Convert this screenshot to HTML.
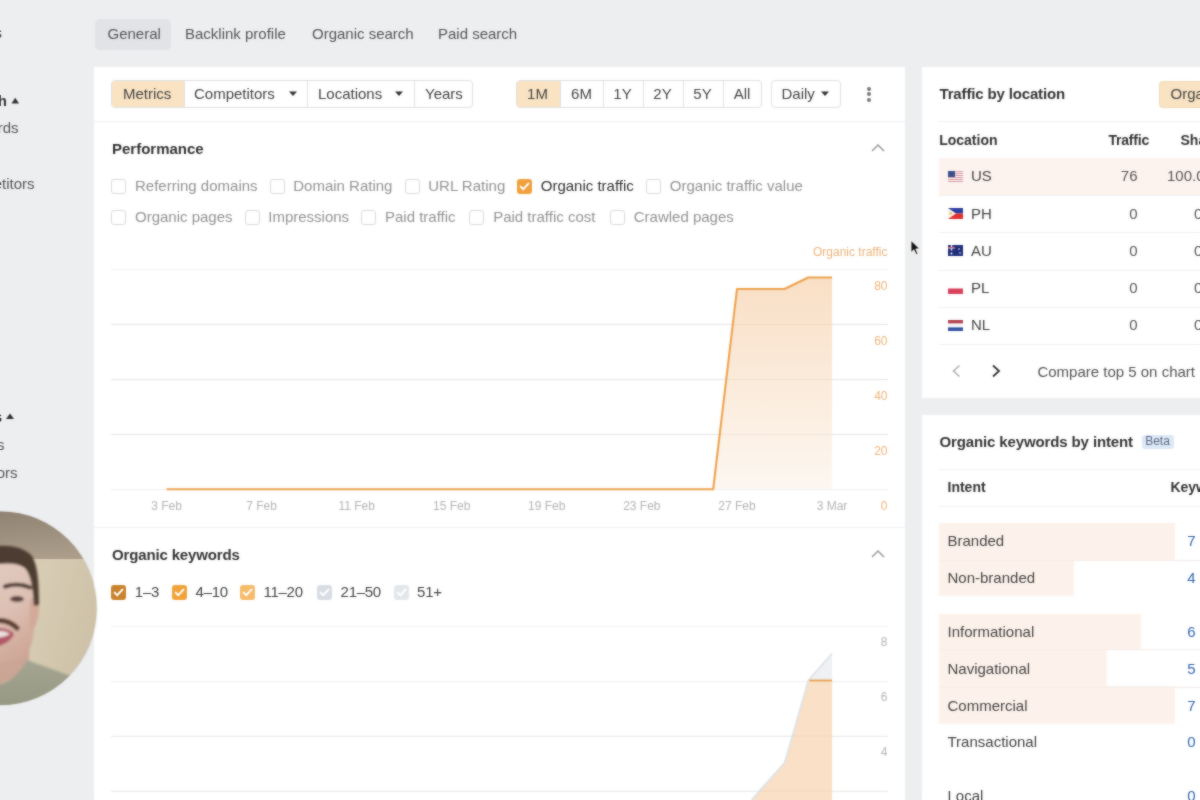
<!DOCTYPE html>
<html><head><meta charset="utf-8">
<style>
*{box-sizing:border-box;margin:0;padding:0}
html,body{width:1200px;height:800px;overflow:hidden}
body{background:#edeef0;font-family:"Liberation Sans",sans-serif;color:#333;position:relative}
.a{position:absolute;white-space:nowrap}
svg{position:absolute;left:0;top:0}
#root{position:absolute;left:0;top:0;width:1200px;height:800px;background:#edeef0;overflow:hidden}
</style></head><body><div id="root" style="will-change:transform">
<div class="a" style="top:23.80px;font-size:15px;line-height:18px;color:#555;font-weight:normal;right:1198px;">s</div>
<div class="a" style="top:91.80px;font-size:15px;line-height:18px;color:#333;font-weight:bold;right:1193px;">Organic search</div>
<svg width="30" height="30" style="left:10px;top:96px"><path d="M1.5 7.5 L5.25 1.8 L9 7.5Z" fill="#333"/></svg>
<div class="a" style="top:119.30px;font-size:15px;line-height:18px;color:#555;font-weight:normal;right:1181.5px;">Organic keywords</div>
<div class="a" style="top:174.50px;font-size:15px;line-height:18px;color:#555;font-weight:normal;right:1165.5px;">Competitors</div>
<div class="a" style="top:407.80px;font-size:15px;line-height:18px;color:#333;font-weight:bold;right:1198px;">Paid keywords</div>
<svg width="30" height="30" style="left:5px;top:412px"><path d="M1 7 L5 1.6 L9 7Z" fill="#333"/></svg>
<div class="a" style="top:436.30px;font-size:15px;line-height:18px;color:#555;font-weight:normal;right:1195.5px;">Ads</div>
<div class="a" style="top:463.80px;font-size:15px;line-height:18px;color:#555;font-weight:normal;right:1182.5px;">Competitors</div>
<div class="a" style="left:95px;top:19px;width:76px;height:31px;background:#e1e3e7;border-radius:5px"></div>
<div class="a" style="top:24.60px;font-size:15px;line-height:18px;color:#555;font-weight:normal;left:107.5px;">General</div>
<div class="a" style="top:24.60px;font-size:15px;line-height:18px;color:#555;font-weight:normal;left:185px;">Backlink profile</div>
<div class="a" style="top:24.60px;font-size:15px;line-height:18px;color:#555;font-weight:normal;left:312px;">Organic search</div>
<div class="a" style="top:24.60px;font-size:15px;line-height:18px;color:#555;font-weight:normal;left:438px;">Paid search</div>
<div class="a" style="left:94px;top:67px;width:811px;height:740px;background:#fff;"></div>
<div class="a" style="left:94px;top:121px;width:811px;height:1px;background:#eef0f2;"></div>
<div class="a" style="left:111px;top:80px;width:362px;height:28px;border:1px solid #dfe1e4;border-radius:4px;background:#fff;overflow:hidden">
<div class="a" style="left:-1px;top:-1px;width:74px;height:28px;background:#f9e3c3"></div>
<div class="a" style="left:72px;top:-1px;width:1px;height:28px;background:#dfe1e4"></div>
<div class="a" style="left:195px;top:-1px;width:1px;height:28px;background:#dfe1e4"></div>
<div class="a" style="left:302px;top:-1px;width:1px;height:28px;background:#dfe1e4"></div>
</div>
<div class="a" style="top:85.10px;font-size:15px;line-height:18px;color:#444;font-weight:normal;left:123px;">Metrics</div>
<div class="a" style="top:85.10px;font-size:15px;line-height:18px;color:#444;font-weight:normal;left:194px;">Competitors</div>
<div class="a" style="top:85.10px;font-size:15px;line-height:18px;color:#444;font-weight:normal;left:318px;">Locations</div>
<div class="a" style="top:85.10px;font-size:15px;line-height:18px;color:#444;font-weight:normal;left:425px;">Years</div>
<svg width="10" height="6" style="left:289px;top:91px"><path d="M0 0.5 L8 0.5 L4 5Z" fill="#333"/></svg>
<svg width="10" height="6" style="left:394.5px;top:91px"><path d="M0 0.5 L8 0.5 L4 5Z" fill="#333"/></svg>
<div class="a" style="left:516px;top:80px;width:246px;height:28px;border:1px solid #dfe1e4;border-radius:4px;background:#fff;overflow:hidden">
<div class="a" style="left:-1px;top:-1px;width:45px;height:28px;background:#f9e3c3"></div>
<div class="a" style="left:43px;top:-1px;width:1px;height:28px;background:#dfe1e4"></div>
<div class="a" style="left:86px;top:-1px;width:1px;height:28px;background:#dfe1e4"></div>
<div class="a" style="left:126px;top:-1px;width:1px;height:28px;background:#dfe1e4"></div>
<div class="a" style="left:166px;top:-1px;width:1px;height:28px;background:#dfe1e4"></div>
<div class="a" style="left:206px;top:-1px;width:1px;height:28px;background:#dfe1e4"></div>
</div>
<div class="a" style="top:85.10px;font-size:15px;line-height:18px;color:#444;font-weight:normal;left:537.5px;transform:translateX(-50%);">1M</div>
<div class="a" style="top:85.10px;font-size:15px;line-height:18px;color:#444;font-weight:normal;left:581.5px;transform:translateX(-50%);">6M</div>
<div class="a" style="top:85.10px;font-size:15px;line-height:18px;color:#444;font-weight:normal;left:622.5px;transform:translateX(-50%);">1Y</div>
<div class="a" style="top:85.10px;font-size:15px;line-height:18px;color:#444;font-weight:normal;left:662.5px;transform:translateX(-50%);">2Y</div>
<div class="a" style="top:85.10px;font-size:15px;line-height:18px;color:#444;font-weight:normal;left:702.5px;transform:translateX(-50%);">5Y</div>
<div class="a" style="top:85.10px;font-size:15px;line-height:18px;color:#444;font-weight:normal;left:742px;transform:translateX(-50%);">All</div>
<div class="a" style="left:771px;top:80px;width:70px;height:28px;border:1px solid #dfe1e4;border-radius:4px;background:#fff;overflow:hidden">
</div>
<div class="a" style="top:85.10px;font-size:15px;line-height:18px;color:#444;font-weight:normal;left:781.5px;">Daily</div>
<svg width="10" height="6" style="left:821px;top:91px"><path d="M0 0.5 L8 0.5 L4 5Z" fill="#333"/></svg>
<div class="a" style="left:866.5px;top:86.5px;width:4.4px;height:4.4px;border-radius:50%;background:#777"></div>
<div class="a" style="left:866.5px;top:92px;width:4.4px;height:4.4px;border-radius:50%;background:#777"></div>
<div class="a" style="left:866.5px;top:97.5px;width:4.4px;height:4.4px;border-radius:50%;background:#777"></div>
<div class="a" style="top:140.10px;font-size:15px;line-height:18px;color:#333;font-weight:bold;left:112px;">Performance</div>
<svg width="14" height="9" style="left:871px;top:143px"><path d="M1 8 L7 2 L13 8" fill="none" stroke="#9a9a9a" stroke-width="1.5"/></svg>
<div class="a" style="left:111.25px;top:178.75px;width:15px;height:15px;border-radius:3px;border:1px solid #d9dbde;background:#fff"></div>
<div class="a" style="top:177.10px;font-size:15px;line-height:18px;color:#939393;font-weight:normal;left:135.0px;">Referring domains</div>
<div class="a" style="left:269.5px;top:178.75px;width:15px;height:15px;border-radius:3px;border:1px solid #d9dbde;background:#fff"></div>
<div class="a" style="top:177.10px;font-size:15px;line-height:18px;color:#939393;font-weight:normal;left:293.25px;">Domain Rating</div>
<div class="a" style="left:404.5px;top:178.75px;width:15px;height:15px;border-radius:3px;border:1px solid #d9dbde;background:#fff"></div>
<div class="a" style="top:177.10px;font-size:15px;line-height:18px;color:#939393;font-weight:normal;left:428.25px;">URL Rating</div>
<div class="a" style="left:517px;top:178.75px;width:15px;height:15px;border-radius:3px;background:#f0a03c"></div>
<svg width="15" height="15" style="left:517px;top:178.75px"><path d="M3.6 7.6 L6.3 10.2 L11.4 4.6" fill="none" stroke="#fff" stroke-width="2" stroke-linecap="round" stroke-linejoin="round"/></svg>
<div class="a" style="top:177.10px;font-size:15px;line-height:18px;color:#333;font-weight:normal;left:540.75px;">Organic traffic</div>
<div class="a" style="left:646px;top:178.75px;width:15px;height:15px;border-radius:3px;border:1px solid #d9dbde;background:#fff"></div>
<div class="a" style="top:177.10px;font-size:15px;line-height:18px;color:#939393;font-weight:normal;left:669.75px;">Organic traffic value</div>
<div class="a" style="left:111.25px;top:209.75px;width:15px;height:15px;border-radius:3px;border:1px solid #d9dbde;background:#fff"></div>
<div class="a" style="top:208.10px;font-size:15px;line-height:18px;color:#939393;font-weight:normal;left:135.0px;">Organic pages</div>
<div class="a" style="left:244.5px;top:209.75px;width:15px;height:15px;border-radius:3px;border:1px solid #d9dbde;background:#fff"></div>
<div class="a" style="top:208.10px;font-size:15px;line-height:18px;color:#939393;font-weight:normal;left:268.25px;">Impressions</div>
<div class="a" style="left:361.25px;top:209.75px;width:15px;height:15px;border-radius:3px;border:1px solid #d9dbde;background:#fff"></div>
<div class="a" style="top:208.10px;font-size:15px;line-height:18px;color:#939393;font-weight:normal;left:385.0px;">Paid traffic</div>
<div class="a" style="left:469.4px;top:209.75px;width:15px;height:15px;border-radius:3px;border:1px solid #d9dbde;background:#fff"></div>
<div class="a" style="top:208.10px;font-size:15px;line-height:18px;color:#939393;font-weight:normal;left:493.15px;">Paid traffic cost</div>
<div class="a" style="left:610px;top:209.75px;width:15px;height:15px;border-radius:3px;border:1px solid #d9dbde;background:#fff"></div>
<div class="a" style="top:208.10px;font-size:15px;line-height:18px;color:#939393;font-weight:normal;left:633.75px;">Crawled pages</div>
<div class="a" style="top:244.54px;font-size:12px;line-height:14px;color:#eab47a;font-weight:normal;right:312.5px;">Organic traffic</div>
<div class="a" style="left:111px;top:269px;width:777px;height:1px;background:#f0f0f2;"></div>
<div class="a" style="left:111px;top:324px;width:777px;height:1px;background:#f0f0f2;"></div>
<div class="a" style="left:111px;top:379px;width:777px;height:1px;background:#f0f0f2;"></div>
<div class="a" style="left:111px;top:434px;width:777px;height:1px;background:#f0f0f2;"></div>
<div class="a" style="left:111px;top:489px;width:777px;height:1px;background:#f0f0f2;"></div>
<div class="a" style="top:278.64px;font-size:12px;line-height:14px;color:#eab47a;font-weight:normal;right:312.5px;">80</div>
<div class="a" style="top:333.64px;font-size:12px;line-height:14px;color:#eab47a;font-weight:normal;right:312.5px;">60</div>
<div class="a" style="top:388.64px;font-size:12px;line-height:14px;color:#eab47a;font-weight:normal;right:312.5px;">40</div>
<div class="a" style="top:443.64px;font-size:12px;line-height:14px;color:#eab47a;font-weight:normal;right:312.5px;">20</div>
<div class="a" style="top:498.64px;font-size:12px;line-height:14px;color:#eab47a;font-weight:normal;right:312.5px;">0</div>
<div class="a" style="top:498.84px;font-size:12px;line-height:14px;color:#b5b5b5;font-weight:normal;left:166.5px;transform:translateX(-50%);">3 Feb</div>
<div class="a" style="top:498.84px;font-size:12px;line-height:14px;color:#b5b5b5;font-weight:normal;left:261.57px;transform:translateX(-50%);">7 Feb</div>
<div class="a" style="top:498.84px;font-size:12px;line-height:14px;color:#b5b5b5;font-weight:normal;left:356.64px;transform:translateX(-50%);">11 Feb</div>
<div class="a" style="top:498.84px;font-size:12px;line-height:14px;color:#b5b5b5;font-weight:normal;left:451.71px;transform:translateX(-50%);">15 Feb</div>
<div class="a" style="top:498.84px;font-size:12px;line-height:14px;color:#b5b5b5;font-weight:normal;left:546.78px;transform:translateX(-50%);">19 Feb</div>
<div class="a" style="top:498.84px;font-size:12px;line-height:14px;color:#b5b5b5;font-weight:normal;left:641.8499999999999px;transform:translateX(-50%);">23 Feb</div>
<div class="a" style="top:498.84px;font-size:12px;line-height:14px;color:#b5b5b5;font-weight:normal;left:736.92px;transform:translateX(-50%);">27 Feb</div>
<div class="a" style="top:498.84px;font-size:12px;line-height:14px;color:#b5b5b5;font-weight:normal;left:831.99px;transform:translateX(-50%);">3 Mar</div>
<svg width="1200" height="800" style="left:0;top:0">
<defs><linearGradient id="g1" x1="0" y1="0" x2="0" y2="1"><stop offset="0" stop-color="#f9dfc5"/><stop offset="1" stop-color="#fdf7f1"/></linearGradient></defs>
<polygon points="713.2,489 737.0,289 784.5,289 808.3,277.5 832.1,277.5 832.1,489" fill="url(#g1)"/>
<rect x="111" y="324" width="777" height="1" fill="rgba(60,40,20,0.05)"/><rect x="111" y="379" width="777" height="1" fill="rgba(60,40,20,0.05)"/><rect x="111" y="434" width="777" height="1" fill="rgba(60,40,20,0.05)"/>
<polyline points="166.6,489.2 713.2,489.2 737.0,289.0 784.5,289.0 808.3,277.5 832.1,277.5" fill="none" stroke="#eca24f" stroke-width="2.1" stroke-linejoin="round"/>
</svg>
<div class="a" style="left:94px;top:526.5px;width:811px;height:1px;background:#eef0f2;"></div>
<div class="a" style="top:545.80px;font-size:15px;line-height:18px;color:#333;font-weight:bold;left:112px;letter-spacing:-0.15px">Organic keywords</div>
<svg width="14" height="9" style="left:871px;top:549px"><path d="M1 8 L7 2 L13 8" fill="none" stroke="#9a9a9a" stroke-width="1.5"/></svg>
<div class="a" style="left:111.25px;top:585px;width:15px;height:15px;border-radius:3px;background:#c8832e"></div>
<svg width="15" height="15" style="left:111.25px;top:585px"><path d="M3.6 7.6 L6.3 10.2 L11.4 4.6" fill="none" stroke="#fff" stroke-width="2" stroke-linecap="round" stroke-linejoin="round"/></svg>
<div class="a" style="top:583.30px;font-size:15px;line-height:18px;color:#444;font-weight:normal;left:134.85px;letter-spacing:-0.3px">1–3</div>
<div class="a" style="left:172px;top:585px;width:15px;height:15px;border-radius:3px;background:#f0a23b"></div>
<svg width="15" height="15" style="left:172px;top:585px"><path d="M3.6 7.6 L6.3 10.2 L11.4 4.6" fill="none" stroke="#fff" stroke-width="2" stroke-linecap="round" stroke-linejoin="round"/></svg>
<div class="a" style="top:583.30px;font-size:15px;line-height:18px;color:#444;font-weight:normal;left:195.6px;letter-spacing:-0.3px">4–10</div>
<div class="a" style="left:240px;top:585px;width:15px;height:15px;border-radius:3px;background:#f5bb6a"></div>
<svg width="15" height="15" style="left:240px;top:585px"><path d="M3.6 7.6 L6.3 10.2 L11.4 4.6" fill="none" stroke="#fff" stroke-width="2" stroke-linecap="round" stroke-linejoin="round"/></svg>
<div class="a" style="top:583.30px;font-size:15px;line-height:18px;color:#444;font-weight:normal;left:263.6px;letter-spacing:-0.3px">11–20</div>
<div class="a" style="left:317px;top:585px;width:15px;height:15px;border-radius:3px;background:#d9dde3"></div>
<svg width="15" height="15" style="left:317px;top:585px"><path d="M3.6 7.6 L6.3 10.2 L11.4 4.6" fill="none" stroke="#fff" stroke-width="2" stroke-linecap="round" stroke-linejoin="round"/></svg>
<div class="a" style="top:583.30px;font-size:15px;line-height:18px;color:#444;font-weight:normal;left:340.6px;letter-spacing:-0.3px">21–50</div>
<div class="a" style="left:393.5px;top:585px;width:15px;height:15px;border-radius:3px;background:#e4e7ea"></div>
<svg width="15" height="15" style="left:393.5px;top:585px"><path d="M3.6 7.6 L6.3 10.2 L11.4 4.6" fill="none" stroke="#fff" stroke-width="2" stroke-linecap="round" stroke-linejoin="round"/></svg>
<div class="a" style="top:583.30px;font-size:15px;line-height:18px;color:#444;font-weight:normal;left:417.1px;letter-spacing:-0.3px">51+</div>
<div class="a" style="left:111px;top:625.5px;width:777px;height:1px;background:#f0f0f2;"></div>
<div class="a" style="left:111px;top:680.5px;width:777px;height:1px;background:#f0f0f2;"></div>
<div class="a" style="left:111px;top:735.5px;width:777px;height:1px;background:#f0f0f2;"></div>
<div class="a" style="left:111px;top:790.5px;width:777px;height:1px;background:#f0f0f2;"></div>
<div class="a" style="top:635.14px;font-size:12px;line-height:14px;color:#b5b5b5;font-weight:normal;right:312.5px;">8</div>
<div class="a" style="top:690.14px;font-size:12px;line-height:14px;color:#b5b5b5;font-weight:normal;right:312.5px;">6</div>
<div class="a" style="top:745.14px;font-size:12px;line-height:14px;color:#b5b5b5;font-weight:normal;right:312.5px;">4</div>
<svg width="1200" height="800" style="left:0;top:0">
<polygon points="751.5,800 784.5,762.9 793.3,733 808.3,680.5 832.1,653.7 832.1,800" fill="#eff1f5"/>
<polygon points="751.5,800 784.5,762.9 793.3,733 808.3,680.5 832.1,680.5 832.1,800" fill="#f9e0c6"/>
<polyline points="751.5,800 784.5,762.9 793.3,733 808.3,680.5 832.1,653.7" fill="none" stroke="#dfe3e9" stroke-width="1.8"/>
<rect x="111" y="735.5" width="777" height="1" fill="rgba(60,40,20,0.05)"/><rect x="111" y="790.5" width="777" height="1" fill="rgba(60,40,20,0.05)"/>
<line x1="809.3" y1="680.5" x2="832.1" y2="680.5" stroke="#e9a04e" stroke-width="1.8"/>
</svg>
<div class="a" style="left:922px;top:67px;width:300px;height:331px;background:#fff;"></div>
<div class="a" style="top:85.30px;font-size:15px;line-height:18px;color:#333;font-weight:bold;left:939.5px;letter-spacing:-0.15px">Traffic by location</div>
<div class="a" style="left:1159px;top:81px;width:60px;height:27px;background:#f9e3c3;border-radius:4px;border:1px solid #f0d9b8"></div>
<div class="a" style="top:85.10px;font-size:15px;line-height:18px;color:#444;font-weight:normal;left:1170.5px;">Organic</div>
<div class="a" style="left:939px;top:120.5px;width:261px;height:1px;background:#eef0f2;"></div>
<div class="a" style="top:131.75px;font-size:14px;line-height:17px;color:#333;font-weight:bold;left:939.2px;">Location</div>
<div class="a" style="top:131.75px;font-size:14px;line-height:17px;color:#333;font-weight:bold;right:51px;letter-spacing:-0.2px">Traffic</div>
<div class="a" style="top:131.75px;font-size:14px;line-height:17px;color:#333;font-weight:bold;left:1180.5px;">Share</div>
<div class="a" style="left:939px;top:157.5px;width:261px;height:37.5px;background:#fdf3ee;"></div>
<div class="a" style="top:167.40px;font-size:15px;line-height:18px;color:#444;font-weight:normal;left:971px;">US</div>
<div class="a" style="top:167.40px;font-size:15px;line-height:18px;color:#555;font-weight:normal;right:62.5px;">76</div>
<div class="a" style="top:167.40px;font-size:15px;line-height:18px;color:#555;font-weight:normal;left:1167px;">100.0%</div>
<div class="a" style="top:204.60px;font-size:15px;line-height:18px;color:#444;font-weight:normal;left:971px;">PH</div>
<div class="a" style="top:204.60px;font-size:15px;line-height:18px;color:#555;font-weight:normal;right:62.5px;">0</div>
<div class="a" style="top:204.60px;font-size:15px;line-height:18px;color:#555;font-weight:normal;left:1194px;">0%</div>
<div class="a" style="left:939px;top:195.2px;width:261px;height:1px;background:#f0f1f3;"></div>
<div class="a" style="top:241.80px;font-size:15px;line-height:18px;color:#444;font-weight:normal;left:971px;">AU</div>
<div class="a" style="top:241.80px;font-size:15px;line-height:18px;color:#555;font-weight:normal;right:62.5px;">0</div>
<div class="a" style="top:241.80px;font-size:15px;line-height:18px;color:#555;font-weight:normal;left:1194px;">0%</div>
<div class="a" style="left:939px;top:232.4px;width:261px;height:1px;background:#f0f1f3;"></div>
<div class="a" style="top:279.00px;font-size:15px;line-height:18px;color:#444;font-weight:normal;left:971px;">PL</div>
<div class="a" style="top:279.00px;font-size:15px;line-height:18px;color:#555;font-weight:normal;right:62.5px;">0</div>
<div class="a" style="top:279.00px;font-size:15px;line-height:18px;color:#555;font-weight:normal;left:1194px;">0%</div>
<div class="a" style="left:939px;top:269.6px;width:261px;height:1px;background:#f0f1f3;"></div>
<div class="a" style="top:316.20px;font-size:15px;line-height:18px;color:#444;font-weight:normal;left:971px;">NL</div>
<div class="a" style="top:316.20px;font-size:15px;line-height:18px;color:#555;font-weight:normal;right:62.5px;">0</div>
<div class="a" style="top:316.20px;font-size:15px;line-height:18px;color:#555;font-weight:normal;left:1194px;">0%</div>
<div class="a" style="left:939px;top:306.8px;width:261px;height:1px;background:#f0f1f3;"></div>
<div class="a" style="left:939px;top:343.5px;width:261px;height:1px;background:#f0f1f3;"></div>
<svg width="15" height="11" style="left:947.5px;top:171.0px"><rect x="0" y="0" width="15" height="1" fill="#d9a0a8"/><rect x="0" y="1" width="15" height="1" fill="#fbeeee"/><rect x="0" y="2" width="15" height="1" fill="#d9a0a8"/><rect x="0" y="3" width="15" height="1" fill="#fbeeee"/><rect x="0" y="4" width="15" height="1" fill="#d9a0a8"/><rect x="0" y="5" width="15" height="1" fill="#fbeeee"/><rect x="0" y="6" width="15" height="1" fill="#d9a0a8"/><rect x="0" y="7" width="15" height="1" fill="#fbeeee"/><rect x="0" y="8" width="15" height="1" fill="#d9a0a8"/><rect x="0" y="9" width="15" height="1" fill="#fbeeee"/><rect x="0" y="10" width="15" height="1" fill="#d9a0a8"/><rect x="0" y="11" width="15" height="1" fill="#fbeeee"/><rect x="0" y="0" width="7" height="6" fill="#3b4f8c"/></svg>
<svg width="15" height="11" style="left:947.5px;top:208.2px"><rect width="15" height="5.5" fill="#2a3fa0"/><rect y="5.5" width="15" height="5.5" fill="#e03030"/><path d="M0 0 L8 5.5 L0 11Z" fill="#f8f4ee"/><circle cx="2.6" cy="5.5" r="1.3" fill="#f0c040"/></svg>
<svg width="15" height="11" style="left:947.5px;top:245.4px"><rect width="15" height="11" fill="#1f2f7a"/><rect x="0" y="2" width="7" height="1.5" fill="#e0e0f0"/><rect x="2.8" y="0" width="1.5" height="5.5" fill="#e0e0f0"/><rect x="0" y="2.3" width="7" height="0.8" fill="#d03040"/><circle cx="3.5" cy="8.5" r="1" fill="#fff"/><circle cx="11" cy="4" r="0.8" fill="#fff"/><circle cx="12" cy="8" r="0.8" fill="#fff"/></svg>
<svg width="15" height="11" style="left:947.5px;top:282.6px"><rect y="5.5" width="15" height="5.5" fill="#d8405a"/></svg>
<svg width="15" height="11" style="left:947.5px;top:319.8px"><rect width="15" height="3.6" fill="#b34050"/><rect y="3.6" width="15" height="3.8" fill="#f6f6f8"/><rect y="7.4" width="15" height="3.6" fill="#3050a0"/></svg>
<svg width="14" height="14" style="left:950px;top:364px"><path d="M9.5 1.5 L3.5 7 L9.5 12.5" fill="none" stroke="#b0b0b0" stroke-width="1.6"/></svg>
<svg width="14" height="14" style="left:989px;top:364px"><path d="M4 1.5 L10 7 L4 12.5" fill="none" stroke="#333" stroke-width="1.8"/></svg>
<div class="a" style="top:362.50px;font-size:15px;line-height:18px;color:#555;font-weight:normal;left:1037.4px;">Compare top 5 on chart</div>
<div class="a" style="left:922px;top:415px;width:300px;height:400px;background:#fff;"></div>
<div class="a" style="top:432.50px;font-size:15px;line-height:18px;color:#333;font-weight:bold;left:939.4px;letter-spacing:-0.12px">Organic keywords by intent</div>
<div class="a" style="left:1141.5px;top:434.5px;width:32px;height:14px;background:#dde8f6;border-radius:3px"></div>
<div class="a" style="top:434.44px;font-size:12px;line-height:14px;color:#5b6b85;font-weight:normal;left:1157.5px;transform:translateX(-50%);">Beta</div>
<div class="a" style="left:939px;top:468.5px;width:261px;height:1px;background:#eef0f2;"></div>
<div class="a" style="top:478.85px;font-size:14px;line-height:17px;color:#333;font-weight:bold;left:947.5px;">Intent</div>
<div class="a" style="top:478.85px;font-size:14px;line-height:17px;color:#333;font-weight:bold;left:1170.4px;">Keywords</div>
<div class="a" style="left:939px;top:505.5px;width:261px;height:1px;background:#eef0f2;"></div>
<div class="a" style="left:939px;top:523px;width:236px;height:36.5px;background:#fdf2eb;"></div>
<div class="a" style="top:531.70px;font-size:15px;line-height:18px;color:#444;font-weight:normal;left:947.5px;">Branded</div>
<div class="a" style="top:531.70px;font-size:15px;line-height:18px;color:#3466ae;font-weight:normal;right:4.5px;">7</div>
<div class="a" style="left:939px;top:559.5px;width:134.5px;height:36px;background:#fdf2eb;"></div>
<div class="a" style="top:568.80px;font-size:15px;line-height:18px;color:#444;font-weight:normal;left:947.5px;">Non-branded</div>
<div class="a" style="top:568.80px;font-size:15px;line-height:18px;color:#3466ae;font-weight:normal;right:4.5px;">4</div>
<div class="a" style="left:939px;top:613.75px;width:202px;height:35px;background:#fdf2eb;"></div>
<div class="a" style="top:622.55px;font-size:15px;line-height:18px;color:#444;font-weight:normal;left:947.5px;">Informational</div>
<div class="a" style="top:622.55px;font-size:15px;line-height:18px;color:#3466ae;font-weight:normal;right:4.5px;">6</div>
<div class="a" style="left:939px;top:648.75px;width:168px;height:37.5px;background:#fdf2eb;"></div>
<div class="a" style="top:659.55px;font-size:15px;line-height:18px;color:#444;font-weight:normal;left:947.5px;">Navigational</div>
<div class="a" style="top:659.55px;font-size:15px;line-height:18px;color:#3466ae;font-weight:normal;right:4.5px;">5</div>
<div class="a" style="left:939px;top:686.25px;width:236px;height:37.5px;background:#fdf2eb;"></div>
<div class="a" style="top:696.55px;font-size:15px;line-height:18px;color:#444;font-weight:normal;left:947.5px;">Commercial</div>
<div class="a" style="top:696.55px;font-size:15px;line-height:18px;color:#3466ae;font-weight:normal;right:4.5px;">7</div>
<div class="a" style="top:733.30px;font-size:15px;line-height:18px;color:#444;font-weight:normal;left:947.5px;">Transactional</div>
<div class="a" style="top:733.30px;font-size:15px;line-height:18px;color:#3466ae;font-weight:normal;right:4.5px;">0</div>
<div class="a" style="top:786.55px;font-size:15px;line-height:18px;color:#444;font-weight:normal;left:947.5px;">Local</div>
<div class="a" style="top:786.55px;font-size:15px;line-height:18px;color:#3466ae;font-weight:normal;right:4.5px;">0</div>
<div class="a" style="left:939px;top:559.5px;width:261px;height:1px;background:#f4ece8;"></div>
<div class="a" style="left:939px;top:649px;width:261px;height:1px;background:#f4ece8;"></div>
<div class="a" style="left:939px;top:686.5px;width:261px;height:1px;background:#f4ece8;"></div>
<svg width="20" height="24" style="left:905px;top:234px"><path d="M6 6.5 L6 18.5 L8.9 15.8 L11.1 20.5 L12.9 19.7 L10.8 15 L14.6 14.8 Z" fill="#111" stroke="#fff" stroke-width="0.8"/></svg>
<svg width="130" height="230" style="left:0;top:500px">
<defs><clipPath id="cp"><circle cx="0" cy="108.25" r="96.75"/></clipPath>
<linearGradient id="wall" x1="0" y1="0" x2="1" y2="0.2"><stop offset="0" stop-color="#d3c8b0"/><stop offset="0.45" stop-color="#dacfb8"/><stop offset="1" stop-color="#c2b497"/></linearGradient>
<linearGradient id="ceil" x1="0" y1="0" x2="0.4" y2="1"><stop offset="0" stop-color="#85786a"/><stop offset="1" stop-color="#ab9d8a"/></linearGradient>
<linearGradient id="skin" x1="0" y1="0" x2="0.3" y2="1"><stop offset="0" stop-color="#e2cbc2"/><stop offset="0.55" stop-color="#ddc0b3"/><stop offset="1" stop-color="#cfa999"/></linearGradient>
<linearGradient id="sw" x1="0" y1="0" x2="0" y2="1"><stop offset="0" stop-color="#a4a591"/><stop offset="1" stop-color="#8e8f7c"/></linearGradient>
<filter id="bl" x="-20%" y="-20%" width="140%" height="140%"><feGaussianBlur stdDeviation="1"/></filter>
</defs>
<circle cx="0" cy="108.25" r="98" fill="rgba(0,0,0,0.05)"/>
<g clip-path="url(#cp)">
<rect x="-100" y="0" width="300" height="230" fill="url(#wall)"/>
<rect x="-100" y="0" width="300" height="59" fill="url(#ceil)"/>
<g filter="url(#bl)">
<path d="M-10 150 L30 140 L28 170 L-10 190Z" fill="#cba595"/>
<path d="M-10 187 C5 185 18 177 27 160 C40 165 58 171 76 178 L110 190 L110 240 L-10 240Z" fill="url(#sw)"/>
<path d="M-10 63 C5 62 18 62 26 70 C32 78 33 92 34 108 C36 122 34 140 29 150 C22 160 10 163 -10 163Z" fill="url(#skin)"/>
<path d="M30 99 C36 96 40 102 39 112 C38 123 34 131 29 131 Z" fill="#d3aa9a"/>
<path d="M-10 47 C6 44 22 46 31 55 C37 63 39 78 39 105 L34 106 C33 88 31 75 25 68 C17 62 5 63 -10 65Z" fill="#4e3d31"/>
<path d="M5 86.5 C12 84 22 84 30 87.5" stroke="#4a3830" stroke-width="4" fill="none" stroke-linecap="round"/>
<ellipse cx="17" cy="99" rx="7" ry="3" fill="#5a4540"/>
<path d="M-10 122 C1 118.5 10 121 17 128" stroke="#5a3c32" stroke-width="5" fill="none" stroke-linecap="round"/>
<path d="M-10 128 C2 127 10 129 14 134 C10 143 0 147 -10 147Z" fill="#b25866"/>
<path d="M-10 131 C0 130 7 131 10 134 C5 137 -2 138 -10 138Z" fill="#ece2df"/>
</g>
</g>
</svg>
</div><div id="root" style="filter:blur(1px);opacity:0.5">
<div class="a" style="top:23.80px;font-size:15px;line-height:18px;color:#555;font-weight:normal;right:1198px;">s</div>
<div class="a" style="top:91.80px;font-size:15px;line-height:18px;color:#333;font-weight:bold;right:1193px;">Organic search</div>
<svg width="30" height="30" style="left:10px;top:96px"><path d="M1.5 7.5 L5.25 1.8 L9 7.5Z" fill="#333"/></svg>
<div class="a" style="top:119.30px;font-size:15px;line-height:18px;color:#555;font-weight:normal;right:1181.5px;">Organic keywords</div>
<div class="a" style="top:174.50px;font-size:15px;line-height:18px;color:#555;font-weight:normal;right:1165.5px;">Competitors</div>
<div class="a" style="top:407.80px;font-size:15px;line-height:18px;color:#333;font-weight:bold;right:1198px;">Paid keywords</div>
<svg width="30" height="30" style="left:5px;top:412px"><path d="M1 7 L5 1.6 L9 7Z" fill="#333"/></svg>
<div class="a" style="top:436.30px;font-size:15px;line-height:18px;color:#555;font-weight:normal;right:1195.5px;">Ads</div>
<div class="a" style="top:463.80px;font-size:15px;line-height:18px;color:#555;font-weight:normal;right:1182.5px;">Competitors</div>
<div class="a" style="left:95px;top:19px;width:76px;height:31px;background:#e1e3e7;border-radius:5px"></div>
<div class="a" style="top:24.60px;font-size:15px;line-height:18px;color:#555;font-weight:normal;left:107.5px;">General</div>
<div class="a" style="top:24.60px;font-size:15px;line-height:18px;color:#555;font-weight:normal;left:185px;">Backlink profile</div>
<div class="a" style="top:24.60px;font-size:15px;line-height:18px;color:#555;font-weight:normal;left:312px;">Organic search</div>
<div class="a" style="top:24.60px;font-size:15px;line-height:18px;color:#555;font-weight:normal;left:438px;">Paid search</div>
<div class="a" style="left:94px;top:67px;width:811px;height:740px;background:#fff;"></div>
<div class="a" style="left:94px;top:121px;width:811px;height:1px;background:#eef0f2;"></div>
<div class="a" style="left:111px;top:80px;width:362px;height:28px;border:1px solid #dfe1e4;border-radius:4px;background:#fff;overflow:hidden">
<div class="a" style="left:-1px;top:-1px;width:74px;height:28px;background:#f9e3c3"></div>
<div class="a" style="left:72px;top:-1px;width:1px;height:28px;background:#dfe1e4"></div>
<div class="a" style="left:195px;top:-1px;width:1px;height:28px;background:#dfe1e4"></div>
<div class="a" style="left:302px;top:-1px;width:1px;height:28px;background:#dfe1e4"></div>
</div>
<div class="a" style="top:85.10px;font-size:15px;line-height:18px;color:#444;font-weight:normal;left:123px;">Metrics</div>
<div class="a" style="top:85.10px;font-size:15px;line-height:18px;color:#444;font-weight:normal;left:194px;">Competitors</div>
<div class="a" style="top:85.10px;font-size:15px;line-height:18px;color:#444;font-weight:normal;left:318px;">Locations</div>
<div class="a" style="top:85.10px;font-size:15px;line-height:18px;color:#444;font-weight:normal;left:425px;">Years</div>
<svg width="10" height="6" style="left:289px;top:91px"><path d="M0 0.5 L8 0.5 L4 5Z" fill="#333"/></svg>
<svg width="10" height="6" style="left:394.5px;top:91px"><path d="M0 0.5 L8 0.5 L4 5Z" fill="#333"/></svg>
<div class="a" style="left:516px;top:80px;width:246px;height:28px;border:1px solid #dfe1e4;border-radius:4px;background:#fff;overflow:hidden">
<div class="a" style="left:-1px;top:-1px;width:45px;height:28px;background:#f9e3c3"></div>
<div class="a" style="left:43px;top:-1px;width:1px;height:28px;background:#dfe1e4"></div>
<div class="a" style="left:86px;top:-1px;width:1px;height:28px;background:#dfe1e4"></div>
<div class="a" style="left:126px;top:-1px;width:1px;height:28px;background:#dfe1e4"></div>
<div class="a" style="left:166px;top:-1px;width:1px;height:28px;background:#dfe1e4"></div>
<div class="a" style="left:206px;top:-1px;width:1px;height:28px;background:#dfe1e4"></div>
</div>
<div class="a" style="top:85.10px;font-size:15px;line-height:18px;color:#444;font-weight:normal;left:537.5px;transform:translateX(-50%);">1M</div>
<div class="a" style="top:85.10px;font-size:15px;line-height:18px;color:#444;font-weight:normal;left:581.5px;transform:translateX(-50%);">6M</div>
<div class="a" style="top:85.10px;font-size:15px;line-height:18px;color:#444;font-weight:normal;left:622.5px;transform:translateX(-50%);">1Y</div>
<div class="a" style="top:85.10px;font-size:15px;line-height:18px;color:#444;font-weight:normal;left:662.5px;transform:translateX(-50%);">2Y</div>
<div class="a" style="top:85.10px;font-size:15px;line-height:18px;color:#444;font-weight:normal;left:702.5px;transform:translateX(-50%);">5Y</div>
<div class="a" style="top:85.10px;font-size:15px;line-height:18px;color:#444;font-weight:normal;left:742px;transform:translateX(-50%);">All</div>
<div class="a" style="left:771px;top:80px;width:70px;height:28px;border:1px solid #dfe1e4;border-radius:4px;background:#fff;overflow:hidden">
</div>
<div class="a" style="top:85.10px;font-size:15px;line-height:18px;color:#444;font-weight:normal;left:781.5px;">Daily</div>
<svg width="10" height="6" style="left:821px;top:91px"><path d="M0 0.5 L8 0.5 L4 5Z" fill="#333"/></svg>
<div class="a" style="left:866.5px;top:86.5px;width:4.4px;height:4.4px;border-radius:50%;background:#777"></div>
<div class="a" style="left:866.5px;top:92px;width:4.4px;height:4.4px;border-radius:50%;background:#777"></div>
<div class="a" style="left:866.5px;top:97.5px;width:4.4px;height:4.4px;border-radius:50%;background:#777"></div>
<div class="a" style="top:140.10px;font-size:15px;line-height:18px;color:#333;font-weight:bold;left:112px;">Performance</div>
<svg width="14" height="9" style="left:871px;top:143px"><path d="M1 8 L7 2 L13 8" fill="none" stroke="#9a9a9a" stroke-width="1.5"/></svg>
<div class="a" style="left:111.25px;top:178.75px;width:15px;height:15px;border-radius:3px;border:1px solid #d9dbde;background:#fff"></div>
<div class="a" style="top:177.10px;font-size:15px;line-height:18px;color:#939393;font-weight:normal;left:135.0px;">Referring domains</div>
<div class="a" style="left:269.5px;top:178.75px;width:15px;height:15px;border-radius:3px;border:1px solid #d9dbde;background:#fff"></div>
<div class="a" style="top:177.10px;font-size:15px;line-height:18px;color:#939393;font-weight:normal;left:293.25px;">Domain Rating</div>
<div class="a" style="left:404.5px;top:178.75px;width:15px;height:15px;border-radius:3px;border:1px solid #d9dbde;background:#fff"></div>
<div class="a" style="top:177.10px;font-size:15px;line-height:18px;color:#939393;font-weight:normal;left:428.25px;">URL Rating</div>
<div class="a" style="left:517px;top:178.75px;width:15px;height:15px;border-radius:3px;background:#f0a03c"></div>
<svg width="15" height="15" style="left:517px;top:178.75px"><path d="M3.6 7.6 L6.3 10.2 L11.4 4.6" fill="none" stroke="#fff" stroke-width="2" stroke-linecap="round" stroke-linejoin="round"/></svg>
<div class="a" style="top:177.10px;font-size:15px;line-height:18px;color:#333;font-weight:normal;left:540.75px;">Organic traffic</div>
<div class="a" style="left:646px;top:178.75px;width:15px;height:15px;border-radius:3px;border:1px solid #d9dbde;background:#fff"></div>
<div class="a" style="top:177.10px;font-size:15px;line-height:18px;color:#939393;font-weight:normal;left:669.75px;">Organic traffic value</div>
<div class="a" style="left:111.25px;top:209.75px;width:15px;height:15px;border-radius:3px;border:1px solid #d9dbde;background:#fff"></div>
<div class="a" style="top:208.10px;font-size:15px;line-height:18px;color:#939393;font-weight:normal;left:135.0px;">Organic pages</div>
<div class="a" style="left:244.5px;top:209.75px;width:15px;height:15px;border-radius:3px;border:1px solid #d9dbde;background:#fff"></div>
<div class="a" style="top:208.10px;font-size:15px;line-height:18px;color:#939393;font-weight:normal;left:268.25px;">Impressions</div>
<div class="a" style="left:361.25px;top:209.75px;width:15px;height:15px;border-radius:3px;border:1px solid #d9dbde;background:#fff"></div>
<div class="a" style="top:208.10px;font-size:15px;line-height:18px;color:#939393;font-weight:normal;left:385.0px;">Paid traffic</div>
<div class="a" style="left:469.4px;top:209.75px;width:15px;height:15px;border-radius:3px;border:1px solid #d9dbde;background:#fff"></div>
<div class="a" style="top:208.10px;font-size:15px;line-height:18px;color:#939393;font-weight:normal;left:493.15px;">Paid traffic cost</div>
<div class="a" style="left:610px;top:209.75px;width:15px;height:15px;border-radius:3px;border:1px solid #d9dbde;background:#fff"></div>
<div class="a" style="top:208.10px;font-size:15px;line-height:18px;color:#939393;font-weight:normal;left:633.75px;">Crawled pages</div>
<div class="a" style="top:244.54px;font-size:12px;line-height:14px;color:#eab47a;font-weight:normal;right:312.5px;">Organic traffic</div>
<div class="a" style="left:111px;top:269px;width:777px;height:1px;background:#f0f0f2;"></div>
<div class="a" style="left:111px;top:324px;width:777px;height:1px;background:#f0f0f2;"></div>
<div class="a" style="left:111px;top:379px;width:777px;height:1px;background:#f0f0f2;"></div>
<div class="a" style="left:111px;top:434px;width:777px;height:1px;background:#f0f0f2;"></div>
<div class="a" style="left:111px;top:489px;width:777px;height:1px;background:#f0f0f2;"></div>
<div class="a" style="top:278.64px;font-size:12px;line-height:14px;color:#eab47a;font-weight:normal;right:312.5px;">80</div>
<div class="a" style="top:333.64px;font-size:12px;line-height:14px;color:#eab47a;font-weight:normal;right:312.5px;">60</div>
<div class="a" style="top:388.64px;font-size:12px;line-height:14px;color:#eab47a;font-weight:normal;right:312.5px;">40</div>
<div class="a" style="top:443.64px;font-size:12px;line-height:14px;color:#eab47a;font-weight:normal;right:312.5px;">20</div>
<div class="a" style="top:498.64px;font-size:12px;line-height:14px;color:#eab47a;font-weight:normal;right:312.5px;">0</div>
<div class="a" style="top:498.84px;font-size:12px;line-height:14px;color:#b5b5b5;font-weight:normal;left:166.5px;transform:translateX(-50%);">3 Feb</div>
<div class="a" style="top:498.84px;font-size:12px;line-height:14px;color:#b5b5b5;font-weight:normal;left:261.57px;transform:translateX(-50%);">7 Feb</div>
<div class="a" style="top:498.84px;font-size:12px;line-height:14px;color:#b5b5b5;font-weight:normal;left:356.64px;transform:translateX(-50%);">11 Feb</div>
<div class="a" style="top:498.84px;font-size:12px;line-height:14px;color:#b5b5b5;font-weight:normal;left:451.71px;transform:translateX(-50%);">15 Feb</div>
<div class="a" style="top:498.84px;font-size:12px;line-height:14px;color:#b5b5b5;font-weight:normal;left:546.78px;transform:translateX(-50%);">19 Feb</div>
<div class="a" style="top:498.84px;font-size:12px;line-height:14px;color:#b5b5b5;font-weight:normal;left:641.8499999999999px;transform:translateX(-50%);">23 Feb</div>
<div class="a" style="top:498.84px;font-size:12px;line-height:14px;color:#b5b5b5;font-weight:normal;left:736.92px;transform:translateX(-50%);">27 Feb</div>
<div class="a" style="top:498.84px;font-size:12px;line-height:14px;color:#b5b5b5;font-weight:normal;left:831.99px;transform:translateX(-50%);">3 Mar</div>
<svg width="1200" height="800" style="left:0;top:0">
<defs><linearGradient id="g12" x1="0" y1="0" x2="0" y2="1"><stop offset="0" stop-color="#f9dfc5"/><stop offset="1" stop-color="#fdf7f1"/></linearGradient></defs>
<polygon points="713.2,489 737.0,289 784.5,289 808.3,277.5 832.1,277.5 832.1,489" fill="url(#g12)"/>
<rect x="111" y="324" width="777" height="1" fill="rgba(60,40,20,0.05)"/><rect x="111" y="379" width="777" height="1" fill="rgba(60,40,20,0.05)"/><rect x="111" y="434" width="777" height="1" fill="rgba(60,40,20,0.05)"/>
<polyline points="166.6,489.2 713.2,489.2 737.0,289.0 784.5,289.0 808.3,277.5 832.1,277.5" fill="none" stroke="#eca24f" stroke-width="2.1" stroke-linejoin="round"/>
</svg>
<div class="a" style="left:94px;top:526.5px;width:811px;height:1px;background:#eef0f2;"></div>
<div class="a" style="top:545.80px;font-size:15px;line-height:18px;color:#333;font-weight:bold;left:112px;letter-spacing:-0.15px">Organic keywords</div>
<svg width="14" height="9" style="left:871px;top:549px"><path d="M1 8 L7 2 L13 8" fill="none" stroke="#9a9a9a" stroke-width="1.5"/></svg>
<div class="a" style="left:111.25px;top:585px;width:15px;height:15px;border-radius:3px;background:#c8832e"></div>
<svg width="15" height="15" style="left:111.25px;top:585px"><path d="M3.6 7.6 L6.3 10.2 L11.4 4.6" fill="none" stroke="#fff" stroke-width="2" stroke-linecap="round" stroke-linejoin="round"/></svg>
<div class="a" style="top:583.30px;font-size:15px;line-height:18px;color:#444;font-weight:normal;left:134.85px;letter-spacing:-0.3px">1–3</div>
<div class="a" style="left:172px;top:585px;width:15px;height:15px;border-radius:3px;background:#f0a23b"></div>
<svg width="15" height="15" style="left:172px;top:585px"><path d="M3.6 7.6 L6.3 10.2 L11.4 4.6" fill="none" stroke="#fff" stroke-width="2" stroke-linecap="round" stroke-linejoin="round"/></svg>
<div class="a" style="top:583.30px;font-size:15px;line-height:18px;color:#444;font-weight:normal;left:195.6px;letter-spacing:-0.3px">4–10</div>
<div class="a" style="left:240px;top:585px;width:15px;height:15px;border-radius:3px;background:#f5bb6a"></div>
<svg width="15" height="15" style="left:240px;top:585px"><path d="M3.6 7.6 L6.3 10.2 L11.4 4.6" fill="none" stroke="#fff" stroke-width="2" stroke-linecap="round" stroke-linejoin="round"/></svg>
<div class="a" style="top:583.30px;font-size:15px;line-height:18px;color:#444;font-weight:normal;left:263.6px;letter-spacing:-0.3px">11–20</div>
<div class="a" style="left:317px;top:585px;width:15px;height:15px;border-radius:3px;background:#d9dde3"></div>
<svg width="15" height="15" style="left:317px;top:585px"><path d="M3.6 7.6 L6.3 10.2 L11.4 4.6" fill="none" stroke="#fff" stroke-width="2" stroke-linecap="round" stroke-linejoin="round"/></svg>
<div class="a" style="top:583.30px;font-size:15px;line-height:18px;color:#444;font-weight:normal;left:340.6px;letter-spacing:-0.3px">21–50</div>
<div class="a" style="left:393.5px;top:585px;width:15px;height:15px;border-radius:3px;background:#e4e7ea"></div>
<svg width="15" height="15" style="left:393.5px;top:585px"><path d="M3.6 7.6 L6.3 10.2 L11.4 4.6" fill="none" stroke="#fff" stroke-width="2" stroke-linecap="round" stroke-linejoin="round"/></svg>
<div class="a" style="top:583.30px;font-size:15px;line-height:18px;color:#444;font-weight:normal;left:417.1px;letter-spacing:-0.3px">51+</div>
<div class="a" style="left:111px;top:625.5px;width:777px;height:1px;background:#f0f0f2;"></div>
<div class="a" style="left:111px;top:680.5px;width:777px;height:1px;background:#f0f0f2;"></div>
<div class="a" style="left:111px;top:735.5px;width:777px;height:1px;background:#f0f0f2;"></div>
<div class="a" style="left:111px;top:790.5px;width:777px;height:1px;background:#f0f0f2;"></div>
<div class="a" style="top:635.14px;font-size:12px;line-height:14px;color:#b5b5b5;font-weight:normal;right:312.5px;">8</div>
<div class="a" style="top:690.14px;font-size:12px;line-height:14px;color:#b5b5b5;font-weight:normal;right:312.5px;">6</div>
<div class="a" style="top:745.14px;font-size:12px;line-height:14px;color:#b5b5b5;font-weight:normal;right:312.5px;">4</div>
<svg width="1200" height="800" style="left:0;top:0">
<polygon points="751.5,800 784.5,762.9 793.3,733 808.3,680.5 832.1,653.7 832.1,800" fill="#eff1f5"/>
<polygon points="751.5,800 784.5,762.9 793.3,733 808.3,680.5 832.1,680.5 832.1,800" fill="#f9e0c6"/>
<polyline points="751.5,800 784.5,762.9 793.3,733 808.3,680.5 832.1,653.7" fill="none" stroke="#dfe3e9" stroke-width="1.8"/>
<rect x="111" y="735.5" width="777" height="1" fill="rgba(60,40,20,0.05)"/><rect x="111" y="790.5" width="777" height="1" fill="rgba(60,40,20,0.05)"/>
<line x1="809.3" y1="680.5" x2="832.1" y2="680.5" stroke="#e9a04e" stroke-width="1.8"/>
</svg>
<div class="a" style="left:922px;top:67px;width:300px;height:331px;background:#fff;"></div>
<div class="a" style="top:85.30px;font-size:15px;line-height:18px;color:#333;font-weight:bold;left:939.5px;letter-spacing:-0.15px">Traffic by location</div>
<div class="a" style="left:1159px;top:81px;width:60px;height:27px;background:#f9e3c3;border-radius:4px;border:1px solid #f0d9b8"></div>
<div class="a" style="top:85.10px;font-size:15px;line-height:18px;color:#444;font-weight:normal;left:1170.5px;">Organic</div>
<div class="a" style="left:939px;top:120.5px;width:261px;height:1px;background:#eef0f2;"></div>
<div class="a" style="top:131.75px;font-size:14px;line-height:17px;color:#333;font-weight:bold;left:939.2px;">Location</div>
<div class="a" style="top:131.75px;font-size:14px;line-height:17px;color:#333;font-weight:bold;right:51px;letter-spacing:-0.2px">Traffic</div>
<div class="a" style="top:131.75px;font-size:14px;line-height:17px;color:#333;font-weight:bold;left:1180.5px;">Share</div>
<div class="a" style="left:939px;top:157.5px;width:261px;height:37.5px;background:#fdf3ee;"></div>
<div class="a" style="top:167.40px;font-size:15px;line-height:18px;color:#444;font-weight:normal;left:971px;">US</div>
<div class="a" style="top:167.40px;font-size:15px;line-height:18px;color:#555;font-weight:normal;right:62.5px;">76</div>
<div class="a" style="top:167.40px;font-size:15px;line-height:18px;color:#555;font-weight:normal;left:1167px;">100.0%</div>
<div class="a" style="top:204.60px;font-size:15px;line-height:18px;color:#444;font-weight:normal;left:971px;">PH</div>
<div class="a" style="top:204.60px;font-size:15px;line-height:18px;color:#555;font-weight:normal;right:62.5px;">0</div>
<div class="a" style="top:204.60px;font-size:15px;line-height:18px;color:#555;font-weight:normal;left:1194px;">0%</div>
<div class="a" style="left:939px;top:195.2px;width:261px;height:1px;background:#f0f1f3;"></div>
<div class="a" style="top:241.80px;font-size:15px;line-height:18px;color:#444;font-weight:normal;left:971px;">AU</div>
<div class="a" style="top:241.80px;font-size:15px;line-height:18px;color:#555;font-weight:normal;right:62.5px;">0</div>
<div class="a" style="top:241.80px;font-size:15px;line-height:18px;color:#555;font-weight:normal;left:1194px;">0%</div>
<div class="a" style="left:939px;top:232.4px;width:261px;height:1px;background:#f0f1f3;"></div>
<div class="a" style="top:279.00px;font-size:15px;line-height:18px;color:#444;font-weight:normal;left:971px;">PL</div>
<div class="a" style="top:279.00px;font-size:15px;line-height:18px;color:#555;font-weight:normal;right:62.5px;">0</div>
<div class="a" style="top:279.00px;font-size:15px;line-height:18px;color:#555;font-weight:normal;left:1194px;">0%</div>
<div class="a" style="left:939px;top:269.6px;width:261px;height:1px;background:#f0f1f3;"></div>
<div class="a" style="top:316.20px;font-size:15px;line-height:18px;color:#444;font-weight:normal;left:971px;">NL</div>
<div class="a" style="top:316.20px;font-size:15px;line-height:18px;color:#555;font-weight:normal;right:62.5px;">0</div>
<div class="a" style="top:316.20px;font-size:15px;line-height:18px;color:#555;font-weight:normal;left:1194px;">0%</div>
<div class="a" style="left:939px;top:306.8px;width:261px;height:1px;background:#f0f1f3;"></div>
<div class="a" style="left:939px;top:343.5px;width:261px;height:1px;background:#f0f1f3;"></div>
<svg width="15" height="11" style="left:947.5px;top:171.0px"><rect x="0" y="0" width="15" height="1" fill="#d9a0a8"/><rect x="0" y="1" width="15" height="1" fill="#fbeeee"/><rect x="0" y="2" width="15" height="1" fill="#d9a0a8"/><rect x="0" y="3" width="15" height="1" fill="#fbeeee"/><rect x="0" y="4" width="15" height="1" fill="#d9a0a8"/><rect x="0" y="5" width="15" height="1" fill="#fbeeee"/><rect x="0" y="6" width="15" height="1" fill="#d9a0a8"/><rect x="0" y="7" width="15" height="1" fill="#fbeeee"/><rect x="0" y="8" width="15" height="1" fill="#d9a0a8"/><rect x="0" y="9" width="15" height="1" fill="#fbeeee"/><rect x="0" y="10" width="15" height="1" fill="#d9a0a8"/><rect x="0" y="11" width="15" height="1" fill="#fbeeee"/><rect x="0" y="0" width="7" height="6" fill="#3b4f8c"/></svg>
<svg width="15" height="11" style="left:947.5px;top:208.2px"><rect width="15" height="5.5" fill="#2a3fa0"/><rect y="5.5" width="15" height="5.5" fill="#e03030"/><path d="M0 0 L8 5.5 L0 11Z" fill="#f8f4ee"/><circle cx="2.6" cy="5.5" r="1.3" fill="#f0c040"/></svg>
<svg width="15" height="11" style="left:947.5px;top:245.4px"><rect width="15" height="11" fill="#1f2f7a"/><rect x="0" y="2" width="7" height="1.5" fill="#e0e0f0"/><rect x="2.8" y="0" width="1.5" height="5.5" fill="#e0e0f0"/><rect x="0" y="2.3" width="7" height="0.8" fill="#d03040"/><circle cx="3.5" cy="8.5" r="1" fill="#fff"/><circle cx="11" cy="4" r="0.8" fill="#fff"/><circle cx="12" cy="8" r="0.8" fill="#fff"/></svg>
<svg width="15" height="11" style="left:947.5px;top:282.6px"><rect y="5.5" width="15" height="5.5" fill="#d8405a"/></svg>
<svg width="15" height="11" style="left:947.5px;top:319.8px"><rect width="15" height="3.6" fill="#b34050"/><rect y="3.6" width="15" height="3.8" fill="#f6f6f8"/><rect y="7.4" width="15" height="3.6" fill="#3050a0"/></svg>
<svg width="14" height="14" style="left:950px;top:364px"><path d="M9.5 1.5 L3.5 7 L9.5 12.5" fill="none" stroke="#b0b0b0" stroke-width="1.6"/></svg>
<svg width="14" height="14" style="left:989px;top:364px"><path d="M4 1.5 L10 7 L4 12.5" fill="none" stroke="#333" stroke-width="1.8"/></svg>
<div class="a" style="top:362.50px;font-size:15px;line-height:18px;color:#555;font-weight:normal;left:1037.4px;">Compare top 5 on chart</div>
<div class="a" style="left:922px;top:415px;width:300px;height:400px;background:#fff;"></div>
<div class="a" style="top:432.50px;font-size:15px;line-height:18px;color:#333;font-weight:bold;left:939.4px;letter-spacing:-0.12px">Organic keywords by intent</div>
<div class="a" style="left:1141.5px;top:434.5px;width:32px;height:14px;background:#dde8f6;border-radius:3px"></div>
<div class="a" style="top:434.44px;font-size:12px;line-height:14px;color:#5b6b85;font-weight:normal;left:1157.5px;transform:translateX(-50%);">Beta</div>
<div class="a" style="left:939px;top:468.5px;width:261px;height:1px;background:#eef0f2;"></div>
<div class="a" style="top:478.85px;font-size:14px;line-height:17px;color:#333;font-weight:bold;left:947.5px;">Intent</div>
<div class="a" style="top:478.85px;font-size:14px;line-height:17px;color:#333;font-weight:bold;left:1170.4px;">Keywords</div>
<div class="a" style="left:939px;top:505.5px;width:261px;height:1px;background:#eef0f2;"></div>
<div class="a" style="left:939px;top:523px;width:236px;height:36.5px;background:#fdf2eb;"></div>
<div class="a" style="top:531.70px;font-size:15px;line-height:18px;color:#444;font-weight:normal;left:947.5px;">Branded</div>
<div class="a" style="top:531.70px;font-size:15px;line-height:18px;color:#3466ae;font-weight:normal;right:4.5px;">7</div>
<div class="a" style="left:939px;top:559.5px;width:134.5px;height:36px;background:#fdf2eb;"></div>
<div class="a" style="top:568.80px;font-size:15px;line-height:18px;color:#444;font-weight:normal;left:947.5px;">Non-branded</div>
<div class="a" style="top:568.80px;font-size:15px;line-height:18px;color:#3466ae;font-weight:normal;right:4.5px;">4</div>
<div class="a" style="left:939px;top:613.75px;width:202px;height:35px;background:#fdf2eb;"></div>
<div class="a" style="top:622.55px;font-size:15px;line-height:18px;color:#444;font-weight:normal;left:947.5px;">Informational</div>
<div class="a" style="top:622.55px;font-size:15px;line-height:18px;color:#3466ae;font-weight:normal;right:4.5px;">6</div>
<div class="a" style="left:939px;top:648.75px;width:168px;height:37.5px;background:#fdf2eb;"></div>
<div class="a" style="top:659.55px;font-size:15px;line-height:18px;color:#444;font-weight:normal;left:947.5px;">Navigational</div>
<div class="a" style="top:659.55px;font-size:15px;line-height:18px;color:#3466ae;font-weight:normal;right:4.5px;">5</div>
<div class="a" style="left:939px;top:686.25px;width:236px;height:37.5px;background:#fdf2eb;"></div>
<div class="a" style="top:696.55px;font-size:15px;line-height:18px;color:#444;font-weight:normal;left:947.5px;">Commercial</div>
<div class="a" style="top:696.55px;font-size:15px;line-height:18px;color:#3466ae;font-weight:normal;right:4.5px;">7</div>
<div class="a" style="top:733.30px;font-size:15px;line-height:18px;color:#444;font-weight:normal;left:947.5px;">Transactional</div>
<div class="a" style="top:733.30px;font-size:15px;line-height:18px;color:#3466ae;font-weight:normal;right:4.5px;">0</div>
<div class="a" style="top:786.55px;font-size:15px;line-height:18px;color:#444;font-weight:normal;left:947.5px;">Local</div>
<div class="a" style="top:786.55px;font-size:15px;line-height:18px;color:#3466ae;font-weight:normal;right:4.5px;">0</div>
<div class="a" style="left:939px;top:559.5px;width:261px;height:1px;background:#f4ece8;"></div>
<div class="a" style="left:939px;top:649px;width:261px;height:1px;background:#f4ece8;"></div>
<div class="a" style="left:939px;top:686.5px;width:261px;height:1px;background:#f4ece8;"></div>
<svg width="20" height="24" style="left:905px;top:234px"><path d="M6 6.5 L6 18.5 L8.9 15.8 L11.1 20.5 L12.9 19.7 L10.8 15 L14.6 14.8 Z" fill="#111" stroke="#fff" stroke-width="0.8"/></svg>
<svg width="130" height="230" style="left:0;top:500px">
<defs><clipPath id="cp2"><circle cx="0" cy="108.25" r="96.75"/></clipPath>
<linearGradient id="wall2" x1="0" y1="0" x2="1" y2="0.2"><stop offset="0" stop-color="#d3c8b0"/><stop offset="0.45" stop-color="#dacfb8"/><stop offset="1" stop-color="#c2b497"/></linearGradient>
<linearGradient id="ceil2" x1="0" y1="0" x2="0.4" y2="1"><stop offset="0" stop-color="#85786a"/><stop offset="1" stop-color="#ab9d8a"/></linearGradient>
<linearGradient id="skin2" x1="0" y1="0" x2="0.3" y2="1"><stop offset="0" stop-color="#e2cbc2"/><stop offset="0.55" stop-color="#ddc0b3"/><stop offset="1" stop-color="#cfa999"/></linearGradient>
<linearGradient id="sw2" x1="0" y1="0" x2="0" y2="1"><stop offset="0" stop-color="#a4a591"/><stop offset="1" stop-color="#8e8f7c"/></linearGradient>
<filter id="bl2" x="-20%" y="-20%" width="140%" height="140%"><feGaussianBlur stdDeviation="1"/></filter>
</defs>
<circle cx="0" cy="108.25" r="98" fill="rgba(0,0,0,0.05)"/>
<g clip-path="url(#cp2)">
<rect x="-100" y="0" width="300" height="230" fill="url(#wall2)"/>
<rect x="-100" y="0" width="300" height="59" fill="url(#ceil2)"/>
<g filter="url(#bl2)">
<path d="M-10 150 L30 140 L28 170 L-10 190Z" fill="#cba595"/>
<path d="M-10 187 C5 185 18 177 27 160 C40 165 58 171 76 178 L110 190 L110 240 L-10 240Z" fill="url(#sw2)"/>
<path d="M-10 63 C5 62 18 62 26 70 C32 78 33 92 34 108 C36 122 34 140 29 150 C22 160 10 163 -10 163Z" fill="url(#skin2)"/>
<path d="M30 99 C36 96 40 102 39 112 C38 123 34 131 29 131 Z" fill="#d3aa9a"/>
<path d="M-10 47 C6 44 22 46 31 55 C37 63 39 78 39 105 L34 106 C33 88 31 75 25 68 C17 62 5 63 -10 65Z" fill="#4e3d31"/>
<path d="M5 86.5 C12 84 22 84 30 87.5" stroke="#4a3830" stroke-width="4" fill="none" stroke-linecap="round"/>
<ellipse cx="17" cy="99" rx="7" ry="3" fill="#5a4540"/>
<path d="M-10 122 C1 118.5 10 121 17 128" stroke="#5a3c32" stroke-width="5" fill="none" stroke-linecap="round"/>
<path d="M-10 128 C2 127 10 129 14 134 C10 143 0 147 -10 147Z" fill="#b25866"/>
<path d="M-10 131 C0 130 7 131 10 134 C5 137 -2 138 -10 138Z" fill="#ece2df"/>
</g>
</g>
</svg>
</div></body></html>
